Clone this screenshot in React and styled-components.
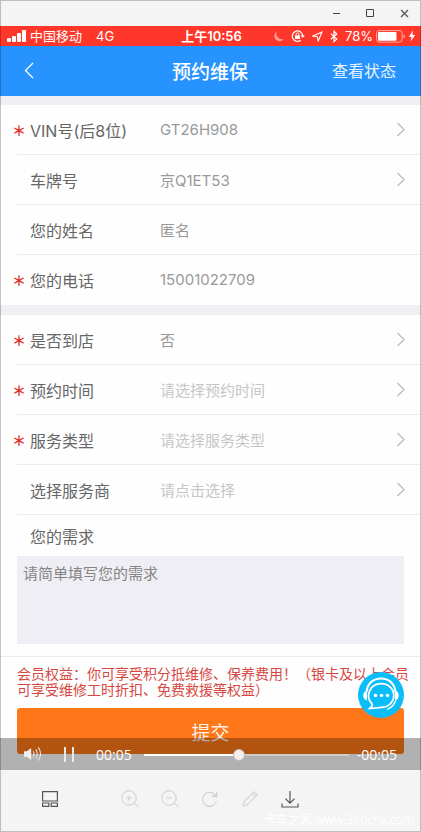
import { useState } from "react";
import styled, { createGlobalStyle } from "styled-components";

const firstFields = [
  { id: "vin", label: "VIN号(后8位)", value: "GT26H908", required: true, picker: true },
  { id: "plate", label: "车牌号", value: "京Q1ET53", picker: true },
  { id: "name", label: "您的姓名", value: "匿名" },
  { id: "phone", label: "您的电话", value: "15001022709", required: true },
];

const secondFields = [
  { id: "visit", label: "是否到店", value: "否", required: true, picker: true },
  { id: "time", label: "预约时间", hint: "请选择预约时间", required: true, picker: true },
  { id: "type", label: "服务类型", hint: "请选择服务类型", required: true, picker: true },
  { id: "dealer", label: "选择服务商", hint: "请点击选择", picker: true },
];

const FieldRow = ({ field }) => (
  <Row>
    <Star>{field.required ? "＊" : ""}</Star>
    <Label htmlFor={field.id}>{field.label}</Label>
    {field.picker ? (
      <Picker id={field.id} type="button" $empty={!field.value}>
        {field.value || field.hint}
        <svg width="9" height="15" viewBox="0 0 9 15" fill="none" stroke="#bdbdbd" strokeWidth="1.3">
          <path d="M1.500 1l6.500 6.500L1.500 14" />
        </svg>
      </Picker>
    ) : (
      <TextInput id={field.id} type="text" defaultValue={field.value} />
    )}
  </Row>
);

const TitleBar = () => (
  <Title>
    <WindowButton type="button" aria-label="最小化">
      <svg width="9" height="9" viewBox="0 0 9 9" stroke="#444">
        <path d="M1 4.5h7" />
      </svg>
    </WindowButton>
    <WindowButton type="button" aria-label="最大化">
      <svg width="9" height="9" viewBox="0 0 9 9" fill="none" stroke="#444">
        <path d="M.5 .5h7v7h-7z" />
      </svg>
    </WindowButton>
    <WindowButton type="button" aria-label="关闭">
      <svg width="9" height="9" viewBox="0 0 9 9" stroke="#555" strokeWidth="1.3">
        <path d="M1 1l7 7M8 1l-7 7" />
      </svg>
    </WindowButton>
  </Title>
);

const StatusBar = () => (
  <Status>
    <Carrier>
      <svg width="20" height="12" viewBox="0 0 20 12" fill="#fff">
        <rect x="0" y="8" width="4" height="4" rx="1" />
        <rect x="5" y="6" width="4" height="6" rx="1" />
        <rect x="10" y="3" width="4" height="9" rx="1" />
        <rect x="15" y="0" width="4" height="12" rx="1" />
      </svg>
      <span>中国移动</span>
      <Network>4G</Network>
    </Carrier>
    <Clock>上午10:56</Clock>
    <Indicators>
      <svg width="10" height="11" viewBox="0 0 10 11" fill="#ff9d95">
        <path d="M2.8 .6A5.2 5.2 0 1 0 9.8 8 5.600 5.600 0 0 1 2.8 .6z" />
      </svg>
      <svg width="14" height="12" viewBox="0 0 14 12" fill="none" stroke="#fff" strokeWidth="1.2">
        <path d="M9.8 10.2A5.2 5.2 0 1 1 11.7 6" />
        <path d="M9.8 5.3h4l-2 2.6z" fill="#fff" stroke="none" />
        <rect x="4" y="5.4" width="5" height="3.6" fill="#fff" stroke="none" />
        <path d="M5.1 5.6V4.4a1.4 1.4 0 0 1 2.8 0v1.2" strokeWidth="1" />
      </svg>
      <svg width="11" height="11" viewBox="0 0 11 11" fill="none" stroke="#fff" strokeWidth="1.1">
        <path d="M10 1L6.2 10 5.3 5.7 1 5z" />
      </svg>
      <svg width="8" height="13" viewBox="0 0 8 13" fill="none" stroke="#fff" strokeWidth="1.2">
        <path d="M.8 3.6l6 5.4L4 11.6V1.2L6.8 4l-6 5.2" />
      </svg>
      <span>78%</span>
      <Power>
        <svg width="30" height="13" viewBox="0 0 30 13">
          <rect x=".6" y=".6" width="25.5" height="11.5" rx="2.5" fill="none" stroke="#ffaca5" />
          <rect x="2" y="2" width="18.5" height="8.8" rx="1" fill="#fff" />
          <path d="M27.5 4.3a2.3 2.3 0 0 1 0 4.2z" fill="#ffaca5" />
        </svg>
        <svg width="8" height="12" viewBox="0 0 8 12" fill="#fff">
          <path d="M5 .5L.8 6.8h2.7L2.6 11.5 7.2 5H4.4z" />
        </svg>
      </Power>
    </Indicators>
  </Status>
);

const Player = () => {
  const [position, setPosition] = useState(46);

  return (
    <Controls>
      <PlayerButton type="button" aria-label="音量">
        <svg width="18" height="16" viewBox="0 0 18 16" fill="none" stroke="#e4e4e4" strokeWidth="1.1">
          <path d="M0 5.3h2.8L7.2 2v12L2.8 10.7H0z" fill="#eee" stroke="none" />
          <path d="M9.2 5.3q1.7 2.7 0 5.4M11.8 3.4q3 4.6 0 9.2M14.3 1.4q4.6 6.6 0 13.2" />
        </svg>
      </PlayerButton>
      <PlayerButton type="button" aria-label="暂停">
        <svg width="10" height="15" viewBox="0 0 10 15" fill="#e8e8e8">
          <path d="M0 0h2v15H0zM8 0h2v15H8z" />
        </svg>
      </PlayerButton>
      <Time>00:05</Time>
      <Seek
        type="range"
        min="0"
        max="100"
        aria-label="播放进度"
        value={position}
        $position={position}
        onChange={(e) => setPosition(Number(e.target.value))}
      />
      <Time>-00:05</Time>
    </Controls>
  );
};

const ToolBar = () => (
  <Footer>
    <Tools>
      <ToolButton type="button" aria-label="缩略图" $first>
        <svg width="16" height="16" viewBox="0 0 16 16" fill="none" stroke="#555" strokeWidth="1.2">
          <path d="M.6 .6h14.800v9.400H.6zM.6 12h6.200v3.400H.6zM9.200 12h6.200v3.400H9.200z" />
        </svg>
      </ToolButton>
      <ToolButton type="button" aria-label="放大">
        <svg width="18" height="18" viewBox="0 0 18 18" fill="none" stroke="#ccc">
          <circle cx="8" cy="8" r="7.2" />
          <path d="M13.2 13.2l4.2 4.2M5.3 8h5.4M8 5.3v5.4" />
        </svg>
      </ToolButton>
      <ToolButton type="button" aria-label="缩小">
        <svg width="18" height="18" viewBox="0 0 18 18" fill="none" stroke="#ccc">
          <circle cx="8" cy="8" r="7.2" />
          <path d="M13.2 13.2l4.2 4.2M5.3 8h5.4" />
        </svg>
      </ToolButton>
      <ToolButton type="button" aria-label="旋转">
        <svg width="16" height="16" viewBox="0 0 16 16" fill="none" stroke="#ccc" strokeWidth="1.1">
          <path d="M14.4 10.4A7 7 0 1 1 14 5.2M14.8 .8v4.6h-4.6" />
        </svg>
      </ToolButton>
      <ToolButton type="button" aria-label="编辑">
        <svg width="16" height="16" viewBox="0 0 16 16" fill="none" stroke="#d4d4d4" strokeWidth="1.1">
          <path d="M1 15l1.1-4.2L12 .9l3 3-9.9 9.9zM10.4 2.6l3 3" />
        </svg>
      </ToolButton>
      <ToolButton type="button" aria-label="下载">
        <svg width="18" height="17" viewBox="0 0 18 17" fill="none" stroke="#555" strokeWidth="1.2">
          <path d="M9 0v12M4.4 7.6L9 12.2l4.6-4.6M1 12.6V16h16v-3.4" />
        </svg>
      </ToolButton>
    </Tools>
    <Watermark>
      卡车之家 <b>www.360che.com</b>
    </Watermark>
  </Footer>
);

const App = () => (
  <>
    <GlobalStyle />
    <Window>
      <TitleBar />
      <Screen>
        <StatusBar />
        <NavBar>
          <BackButton type="button" aria-label="返回">
            <svg width="10" height="17" viewBox="0 0 10 17" fill="none" stroke="#fff" strokeWidth="1.3">
              <path d="M9 1L1.5 8.5 9 16" />
            </svg>
          </BackButton>
          <h1>预约维保</h1>
          <NavLink href="#status">查看状态</NavLink>
        </NavBar>

        <Form onSubmit={(e) => e.preventDefault()}>
          <Group>
            {firstFields.map((field) => (
              <FieldRow key={field.id} field={field} />
            ))}
          </Group>
          <Group>
            {secondFields.map((field) => (
              <FieldRow key={field.id} field={field} />
            ))}
            <Needs>
              <label htmlFor="needs">您的需求</label>
              <textarea id="needs" placeholder="请简单填写您的需求" />
            </Needs>
          </Group>
          <Bottom>
            <Notice>
              会员权益：你可享受积分抵维修、保养费用！（银卡及以上会员可享受维修工时折扣、免费救援等权益）
            </Notice>
            <Submit type="submit">提交</Submit>
          </Bottom>
        </Form>

        <ServiceButton type="button" aria-label="在线客服">
          <svg width="46" height="46" viewBox="0 0 46 46" fill="none" stroke="#fff">
            <circle cx="23" cy="23" r="23" fill="#0bbdf8" stroke="none" />
            <path d="M8.5 20C9.5 11 15.5 6.5 23 6.5S36.5 11 37.5 20" strokeWidth="2" />
            <path
              d="M14.2 32.2C6.5 24 12 11.7 23 11.7c7.5 0 12.8 5.3 12.8 11.8S30.5 35.3 23 35.3c-2 0-3 1-11 1 2-1.5 2.5-2.5 2.2-4.1z"
              strokeWidth="1.8"
            />
            <path d="M38 27c-1 5-4 8.5-9 10.5" strokeWidth="1.3" />
            <path d="M9 18.5v10c-5-1-5-9 0-10zM37 18.5v10c5-1 5-9 0-10z" fill="#fff" stroke="none" />
            <g fill="#fff" stroke="none">
              <circle cx="17.5" cy="23.5" r="1.8" />
              <circle cx="23.5" cy="23.5" r="1.8" />
              <circle cx="29.5" cy="23.5" r="1.8" />
            </g>
          </svg>
        </ServiceButton>
        <Player />
      </Screen>
      <ToolBar />
    </Window>
  </>
);

export default App;

/* ================= STYLES ================= */

const GlobalStyle = createGlobalStyle`
  * {
    box-sizing: border-box;
  }

  body {
    margin: 0;
    background: #f4f4f4;
    font-family: Inter, "Noto Sans CJK SC", sans-serif;
  }

  button, input, textarea {
    margin: 0;
    padding: 0;
    border: 0;
    background: none;
    font: inherit;
    color: inherit;
  }

  svg {
    display: block;
    flex-shrink: 0;
  }
`;

const Window = styled.div`
  position: relative;
  display: flex;
  flex-direction: column;
  min-height: 100vh;
  background: #f4f4f4;

  /* thin frame over the whole window */
  &::after {
    content: "";
    position: absolute;
    inset: 0;
    border: 1px solid rgba(0, 0, 0, 0.22);
    pointer-events: none;
  }
`;

const Title = styled.div`
  display: flex;
  justify-content: flex-end;
  height: 26px;
`;

const WindowButton = styled.button`
  display: flex;
  align-items: center;
  justify-content: center;
  width: 34px;
`;

const Screen = styled.main`
  position: relative;
  background: #fefefe;
`;

/* STATUS BAR */
const Status = styled.div`
  display: grid;
  grid-template-columns: 1fr auto 1fr;
  align-items: center;
  height: 20px;
  padding: 0 5px 0 7px;
  background: #ff372a;
  color: #fff;
  font-size: 13px;
  line-height: 18px;
`;

const Carrier = styled.div`
  display: flex;
  align-items: center;
  gap: 3px;
`;

const Network = styled.span`
  margin-left: 11px;
`;

const Clock = styled.span`
  font-weight: 600;
`;

const Indicators = styled.div`
  display: flex;
  align-items: center;
  justify-content: flex-end;
  gap: 7px;
`;

const Power = styled.div`
  display: flex;
  align-items: center;
  gap: 2px;
  margin-left: -4px;
`;

/* NAVIGATION */
const NavBar = styled.header`
  display: grid;
  grid-template-columns: 1fr auto 1fr;
  align-items: center;
  height: 50px;
  padding: 0 25px 2px 24px;
  background: #2693ff;
  color: #fff;

  h1 {
    margin: 0;
    font-size: 19px;
    font-weight: 500;
  }
`;

const BackButton = styled.button`
  justify-self: start;
`;

const NavLink = styled.a`
  justify-self: end;
  color: #e6f3ff;
  font-size: 16px;
  text-decoration: none;
`;

/* FORM */
const Form = styled.form`
  padding-top: 9px;
  background: #efeff4;
`;

const Group = styled.section`
  background: #fefefe;

  & + & {
    margin-top: 10px;
  }
`;

const Row = styled.div`
  display: flex;
  align-items: center;
  height: 50px;
  padding: 0 16px 1px 12px;
  background: linear-gradient(#ececee, #ececee) 17px 100% / 100% 1px no-repeat;

  ${Group}:first-child > &:last-child {
    background: none;
  }
`;

const Star = styled.span`
  flex: 0 0 18px;
  color: #e2302a;
  font-size: 14px;
  font-weight: 700;
`;

const Label = styled.label`
  flex: 0 0 130px;
  color: #666;
  font-size: 16px;
`;

const Picker = styled.button`
  display: flex;
  flex: 1;
  align-items: center;
  justify-content: space-between;
  color: ${({ $empty }) => ($empty ? "#c6c6c6" : "#999")};
  font-size: 15px;
  text-align: left;
`;

const TextInput = styled.input`
  flex: 1;
  min-width: 0;
  color: #999;
  font-size: 15px;
`;

const Needs = styled.div`
  padding: 4px 17px 12px;
  border-bottom: 1px solid #ececee;

  label {
    display: block;
    padding-left: 13px;
    color: #666;
    font-size: 16px;
    line-height: 37px;
  }

  textarea {
    display: block;
    width: 100%;
    height: 88px;
    padding: 7px 6px;
    background: #efeef4;
    color: #555;
    font-size: 15px;
    line-height: 22px;
    resize: none;
  }

  textarea::placeholder {
    color: #858585;
  }
`;

const Bottom = styled.div`
  padding: 9px 17px 16px;
  background: #fefefe;
`;

const Notice = styled.p`
  margin: 0 -8px 10px 0;
  color: #d8473f;
  font-size: 14px;
  line-height: 16px;
`;

const Submit = styled.button`
  display: block;
  width: 100%;
  height: 46px;
  border-radius: 3px;
  background: #ff7718;
  color: #fff3e8;
  font-size: 19px;
`;

const ServiceButton = styled.button`
  position: absolute;
  right: 17px;
  bottom: 52px;
  border-radius: 50%;
`;

/* VIDEO CONTROLS */
const Controls = styled.div`
  position: absolute;
  right: 0;
  bottom: 0;
  left: 0;
  display: flex;
  align-items: center;
  height: 32px;
  padding: 0 24px;
  background: rgba(0, 0, 0, 0.3);
  color: #fff;
`;

const PlayerButton = styled.button`
  margin-right: 22px;
`;

const Time = styled.span`
  font-family: "Open Sans", sans-serif;
  font-size: 14px;
`;

const Seek = styled.input`
  flex: 1;
  min-width: 0;
  height: 12px;
  margin: 2px 8px 0 12px;
  appearance: none;

  &::-webkit-slider-runnable-track {
    height: 2px;
    background: linear-gradient(
      to right,
      #fff ${({ $position }) => $position}%,
      rgba(255, 255, 255, 0.35) ${({ $position }) => $position}%
    );
  }

  &::-webkit-slider-thumb {
    width: 12px;
    height: 12px;
    margin-top: -5px;
    border: 1px solid #bbb;
    border-radius: 50%;
    background: #f3f0ee;
    appearance: none;
  }
`;

/* TOOLBAR */
const Footer = styled.footer`
  flex: 1;
  padding-top: 9px;
`;

const Tools = styled.div`
  display: flex;
  height: 40px;
  padding-left: 30px;
`;

const ToolButton = styled.button`
  display: flex;
  align-items: center;
  justify-content: center;
  width: 40px;
  margin-right: ${({ $first }) => ($first ? "40px" : "0")};
`;

const Watermark = styled.div`
  height: 13px;
  padding-right: 7px;
  color: #fff;
  font-size: 12px;
  line-height: 2px;
  text-align: right;

  b {
    font-family: "Open Sans", sans-serif;
    font-weight: 400;
  }
`;
